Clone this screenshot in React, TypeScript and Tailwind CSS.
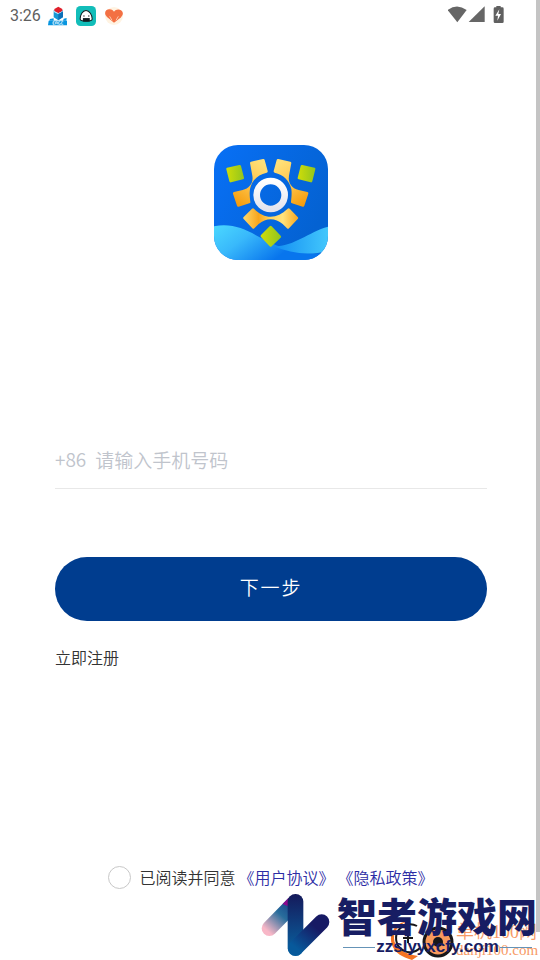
import { useState } from 'react';

function StatusBar() {
  return (
    <header className="flex h-8 items-center pl-[10px] pr-7 text-[#606060]">
      <time className="font-['Roboto',sans-serif] text-base leading-8 font-normal">3:26</time>
      <svg className="ml-[7px] h-5 w-5" viewBox="144 18 60 60" aria-hidden="true">
        <path d="M161 31l14 7 14-7v21l-14 9-14-9z" fill="#1597d5" />
        <path d="M163 27l12-7 12 7v6l-12 7-12-7z" fill="#e01f2b" />
        <path d="M161 34l14 7 14-7" stroke="#d8f1ff" strokeWidth="3" fill="none" />
        <path d="M175 42v18l14-9V34z" fill="#0b6fb8" />
        <path d="M146 62h55v14h-57z" fill="#0795df" />
        <path d="M191 56l9-2-1 8h-10zM150 57l11-2v7h-13z" fill="#0795df" />
        <path d="M164 65h-5v8h5m-5-4h4m4 4v-8h5v8m-5-4h5m9-4h-5v8h5v-4m9-4h-5v8h5" stroke="#fff" strokeWidth="2" fill="none" />
      </svg>
      <svg className="ml-2 h-5 w-5" viewBox="228 18 58 58" aria-hidden="true">
        <rect x="228" y="18" width="58" height="58" rx="13" fill="#12bdb9" />
        <path d="M240 56c0-12 7-25 17-25s18 13 18 25c0 8-35 8-35 0z" fill="#fff" stroke="#101c20" strokeWidth="3" />
        <path d="M248 53h20v10h-20z" fill="#101c20" />
        <path d="M249 47h4m10 0h4" stroke="#101c20" strokeWidth="3" />
      </svg>
      <svg className="ml-2 h-5 w-5" viewBox="312 18 60 60" aria-hidden="true">
        <circle cx="342" cy="48" r="27" fill="#fff3e2" />
        <path d="M342 68l-21-17c-12-12-3-24 8-23 7 0 10 3 13 7 5-7 14-9 21-4 9 7 6 15-1 22z" fill="#f37043" />
        <path d="M318 56c8 0 14 5 16 12m32-12c-8 0-14 5-16 12M329 49l7 12m19-12l-7 12" stroke="#fff0df" strokeWidth="2" fill="none" />
      </svg>
      <svg className="ml-auto h-5 w-[60px]" viewBox="55 18 180 60" aria-hidden="true">
        <path d="M54 30Q82 9 111 30L83 67z" fill="#666" />
        <path d="M117 66h48V19z" fill="#666" />
        <path d="M192 26q0-4 4-4h4v-4h13v4h5q4 0 4 4v39q0 4-4 4h-22q-4 0-4-4z" fill="#606060" />
        <path d="M209 28l-12 19h8l-2 15 11-20h-8z" fill="#fff" />
      </svg>
    </header>
  );
}

function AppLogo() {
  const arm =
    'M132 75q0-3 3-4l36-8q4-1 5 3l9 33q1 4-3 5c-27 6-44 23-50 49-1 8-2 17 1 38q1 4-3 5l-32 10q-4 1-5-3l-12-36q-1-4 3-5l26-6c20-5 33-21 29-43z';
  return (
    <svg className="h-[115px] w-[114px]" viewBox="24 21 342 345" role="img" aria-label="App logo">
      <defs>
        <linearGradient id="sky" x1="0" y1="0" x2="1" y2="0.5">
          <stop stopColor="#0870f6" />
          <stop offset="1" stopColor="#0462d2" />
        </linearGradient>
        <linearGradient id="wave" x1="0" y1="0" x2="1" y2="0.4">
          <stop stopColor="#4bd8ff" />
          <stop offset="0.35" stopColor="#39b9fb" />
          <stop offset="0.8" stopColor="#0875ed" />
        </linearGradient>
        <linearGradient id="waveRight">
          <stop stopColor="#128df2" />
          <stop offset="1" stopColor="#43c7fc" />
        </linearGradient>
        <linearGradient id="gold" x1="0.7" y1="0" x2="0.2" y2="1">
          <stop stopColor="#ffe078" />
          <stop offset="0.5" stopColor="#ffc54c" />
          <stop offset="1" stopColor="#f59b0b" />
        </linearGradient>
        <linearGradient id="base" x1="0" y1="0" x2="1" y2="0">
          <stop stopColor="#ffd96b" />
          <stop offset="0.28" stopColor="#f8a51c" />
          <stop offset="0.5" stopColor="#ffd660" />
          <stop offset="0.72" stopColor="#ffe27c" />
          <stop offset="1" stopColor="#f9a61d" />
        </linearGradient>
        <linearGradient id="lime">
          <stop stopColor="#d0dd08" />
          <stop offset="1" stopColor="#91c51e" />
        </linearGradient>
        <linearGradient id="ring" x1="0" y1="0" x2="0" y2="1">
          <stop stopColor="#fff" />
          <stop offset="1" stopColor="#e3e4ee" />
        </linearGradient>
        <clipPath id="tile">
          <rect x="24" y="21" width="342" height="345" rx="72" />
        </clipPath>
      </defs>
      <g clipPath="url(#tile)">
        <rect x="24" y="21" width="342" height="345" fill="url(#sky)" />
        <path d="M24 265c75-14 116 26 187 57 55 25 96 29 155 21v23H24z" fill="url(#wave)" />
        <path d="M202 325c62 1 105-43 164-59v72c-53 15-108 10-164-13z" fill="url(#waveRight)" />
      </g>
      <path d={arm} fill="url(#gold)" />
      <path d={arm} fill="url(#gold)" transform="translate(388 0) scale(-1 1)" />
      <path d="M63 89l37-8q4-1 5 3l9 35q1 4-3 5l-36 9q-4 1-5-3l-9-36q-1-4 2-5z" fill="url(#lime)" />
      <path d="M326 89l-37-8q-4-1-5 3l-9 35q-1 4 3 5l36 9q4 1 5-3l9-36q1-4-2-5z" fill="url(#lime)" />
      <path d="M138 212q3-3 6 0c32 32 68 32 101 0q3-3 6 0l24 25q3 3 0 6l-26 28q-3 3-6 0l-13-13c-22-19-50-19-72 0l-13 13q-3 3-6 0l-26-28q-3-3 0-6z" fill="url(#base)" />
      <circle cx="194" cy="171" r="42" fill="none" stroke="url(#ring)" strokeWidth="20" />
      <path d="M191 265q3-3 6 0l27 28q3 3 0 6l-27 26q-3 3-6 0l-26-28q-3-3 0-6z" fill="url(#lime)" />
    </svg>
  );
}

function PartnerMark() {
  return (
    <div className="absolute right-0 bottom-0 flex items-center text-[#f79a66]">
      <svg className="h-10 w-[66px]" viewBox="0 0 66 40" aria-hidden="true">
        <path d="M19 1C5 2-2 14 2 25c3 8 10 12 20 15l6-4C14 34 4 28 4 18 4 10 10 3 19 1z" fill="#f57422" />
        <path d="M27 6a14 14 0 1 0 3 22" stroke="#171719" strokeWidth="2" fill="none" />
        <path d="M13 18h10m-5-5v10" stroke="#171719" strokeWidth="2" />
        <circle cx="48" cy="22" r="14" fill="#f99a5c" stroke="#171719" strokeWidth="3" />
        <circle cx="48" cy="22" r="5" fill="#171719" />
      </svg>
      <div className="w-[84px] font-['Liberation_Serif','Noto_Sans_CJK_SC',serif]">
        <p className="text-[18px] leading-5">单机100网</p>
        <p className="text-[15px] leading-4">danji100.com</p>
      </div>
    </div>
  );
}

function SiteMark() {
  return (
    <div className="absolute right-0 bottom-0 flex items-start gap-[3px] text-[#171d63]">
      <svg className="h-[68px] w-[72px]" viewBox="33 12 216 204" aria-hidden="true">
        <defs>
          <linearGradient id="tail" gradientUnits="userSpaceOnUse" x1="125" y1="40" x2="48" y2="125">
            <stop stopColor="#173f86" />
            <stop offset="0.45" stopColor="#286d9c" />
            <stop offset="1" stopColor="#f8b7c7" />
          </linearGradient>
          <linearGradient id="stem" x1="0" y1="0" x2="0" y2="1">
            <stop stopColor="#151a5b" />
            <stop offset="1" stopColor="#0865a3" />
          </linearGradient>
          <linearGradient id="rise" gradientUnits="userSpaceOnUse" x1="145" y1="185" x2="220" y2="90">
            <stop stopColor="#07599b" />
            <stop offset="0.7" stopColor="#171a64" />
          </linearGradient>
        </defs>
        <path d="M58 121L130 48" stroke="url(#tail)" strokeWidth="46" strokeLinecap="round" />
        <path d="M98 48l20-20v28z" fill="#8c088c" />
        <rect x="113" y="18" width="47" height="186" rx="23" fill="url(#stem)" />
        <path d="M137 180l78-78" stroke="url(#rise)" strokeWidth="46" strokeLinecap="round" />
      </svg>
      <div className="w-[204px] pt-[3px]">
        <p className="pl-px font-['Noto_Sans_CJK_SC',sans-serif] text-[40px] leading-10 font-black whitespace-nowrap">智者游戏网</p>
        <div className="flex items-center gap-px pt-1 pr-2 pl-[7px]">
          <span className="h-px flex-1 bg-[#6593b7]" />
          <span className="font-['Liberation_Sans',sans-serif] text-[17px] leading-4 font-bold">zzslyyxcfy.com</span>
          <span className="h-px flex-1 bg-[#6593b7]" />
        </div>
      </div>
    </div>
  );
}

export default function App() {
  const [phone, setPhone] = useState('');
  const [agreed, setAgreed] = useState(false);

  return (
    <div className="relative flex min-h-screen overflow-hidden bg-white font-['Noto_Sans_CJK_SC',sans-serif] font-[350] text-[#333]">
      <div className="flex min-w-0 flex-1 flex-col">
        <StatusBar />
        <main className="flex flex-1 flex-col pr-[49px] pl-[55px]">
          <div className="flex justify-center pt-[113px]">
            <AppLogo />
          </div>
          <form className="mt-[172px] flex flex-col" onSubmit={(e) => e.preventDefault()}>
            <div className="flex h-[57px] items-center gap-[9px] border-b border-[#e8e8e8] pb-0.5 text-[19px] text-[#c0c4cc]">
              <label htmlFor="phone">+86</label>
              <input
                id="phone"
                type="tel"
                value={phone}
                onChange={(e) => setPhone(e.target.value)}
                placeholder="请输入手机号码"
                className="h-full min-w-0 flex-1 text-[#333] outline-none placeholder:text-[#c0c4cc]"
              />
            </div>
            <button type="submit" className="mt-[68px] h-16 rounded-full bg-[#003d8f] pb-1 text-[19px] tracking-widest text-white">
              下一步
            </button>
          </form>
          <a href="#register" className="mt-6 self-start text-base leading-6">
            立即注册
          </a>
          <div className="mt-auto mb-[70px] flex items-center justify-center gap-2 text-base leading-6">
            <input
              id="agree"
              type="checkbox"
              checked={agreed}
              onChange={(e) => setAgreed(e.target.checked)}
              className="h-[23px] w-[23px] appearance-none rounded-full border border-[#c8c8c8] checked:bg-[#003d8f]"
            />
            <div className="flex gap-[3px] pb-px whitespace-nowrap">
              <label htmlFor="agree">已阅读并同意</label>
              <a href="#terms" className="text-[#2d2da5]">《用户协议》</a>
              <a href="#privacy" className="text-[#2d2da5]">《隐私政策》</a>
            </div>
          </div>
        </main>
      </div>
      <div className="mb-7 w-1 bg-[#c4c4c4]" />
      <PartnerMark />
      <SiteMark />
    </div>
  );
}
